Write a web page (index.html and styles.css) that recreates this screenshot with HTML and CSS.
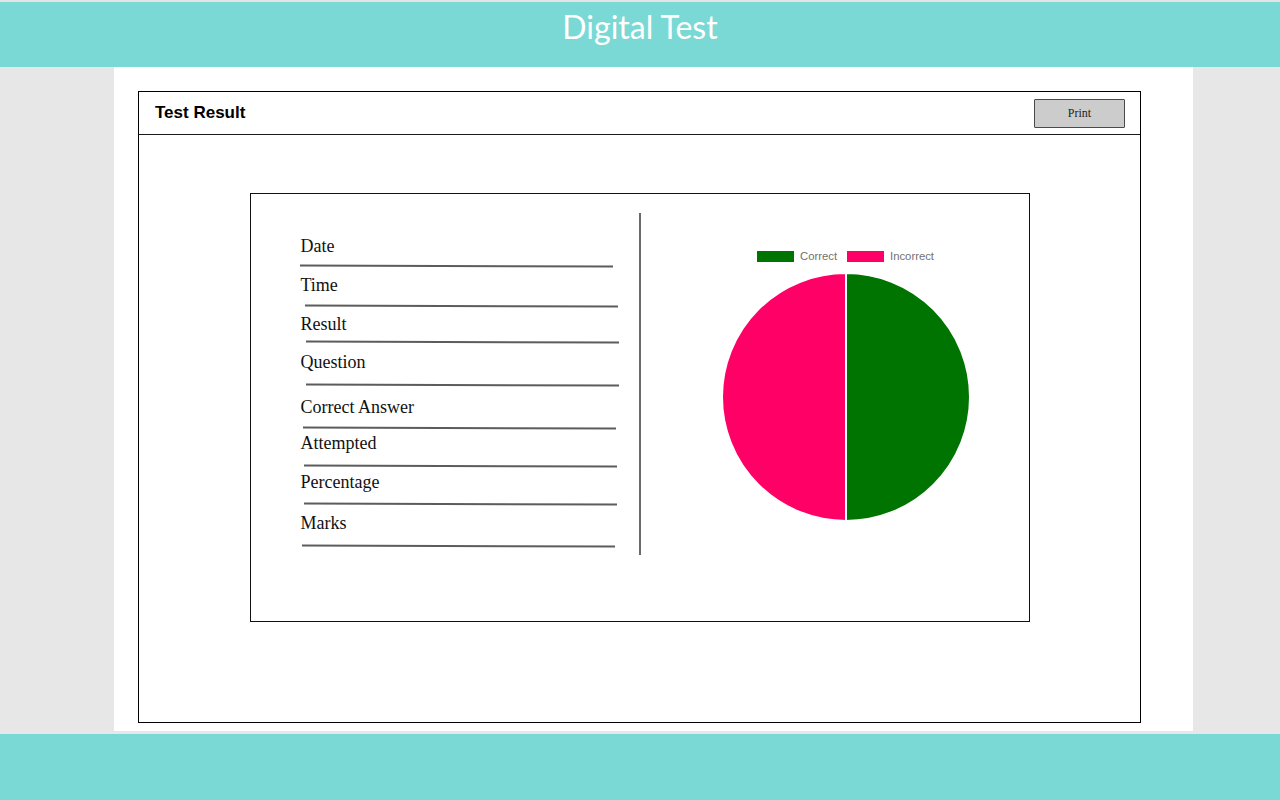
FILE: index.html
```html
<!DOCTYPE html>
<html lang="en">
<head>
<meta charset="utf-8">
<title>Digital Test</title>
<link rel="stylesheet" href="styles.css">
</head>
<body>
<header class="topbar"><h1 class="title">Digital Test</h1></header>
<main class="page">
  <section class="result-card">
    <div class="card-head">
      <h2 class="card-title">Test Result</h2>
      <button class="print-btn" type="button">Print</button>
    </div>
    <div class="card-body">
      <div class="summary">
        <ul class="fields">
          <li class="field"><span class="label">Date</span><span class="rule"></span></li>
          <li class="field"><span class="label">Time</span><span class="rule"></span></li>
          <li class="field"><span class="label">Result</span><span class="rule"></span></li>
          <li class="field"><span class="label">Question</span><span class="rule"></span></li>
          <li class="field"><span class="label">Correct Answer</span><span class="rule"></span></li>
          <li class="field"><span class="label">Attempted</span><span class="rule"></span></li>
          <li class="field"><span class="label">Percentage</span><span class="rule"></span></li>
          <li class="field"><span class="label">Marks</span><span class="rule"></span></li>
        </ul>
        <div class="divider"></div>
        <div class="chart">
          <div class="legend">
            <span class="legend-item"><span class="swatch swatch-correct"></span>Correct</span>
            <span class="legend-item"><span class="swatch swatch-incorrect"></span>Incorrect</span>
          </div>
          <svg class="pie" width="250" height="250" viewBox="0 0 250 250" aria-label="Correct vs incorrect">
            <path d="M125 125 L125 1 A124 124 0 0 1 125 249 Z" fill="#007400" stroke="#ffffff" stroke-width="2"/>
            <path d="M125 125 L125 249 A124 124 0 0 1 125 1 Z" fill="#ff0066" stroke="#ffffff" stroke-width="2"/>
          </svg>
        </div>
      </div>
    </div>
  </section>
</main>
<footer class="bottombar"></footer>
</body>
</html>
```

FILE: styles.css
```css
* { box-sizing: border-box; }

html, body {
  margin: 0;
  padding: 0;
}

body {
  background: #e7e7e7;
  width: 1280px;
  height: 800px;
  overflow: hidden;
  font-family: "Liberation Sans", Arial, sans-serif;
}

.topbar {
  height: 67px;
  border-top: 2px solid #e4e4e4;
  background: #7ad9d4;
  padding-top: 9px;
}

.title {
  margin: 0;
  text-align: center;
  font-family: Lato, "Open Sans", sans-serif;
  font-weight: 400;
  font-size: 32px;
  line-height: 32px;
  color: #ffffff;
}

.page {
  margin-left: 114px;
  width: 1079px;
  height: 664px;
  background: #ffffff;
  padding: 24px 0 0 24px;
}

.result-card {
  width: 1003px;
  height: 632px;
  border: 1px solid #000000;
}

.card-head {
  height: 43px;
  border-bottom: 1px solid #1a1a1a;
  display: flex;
  align-items: center;
  justify-content: space-between;
  padding: 0 15px 0 16px;
}

.card-title {
  margin: 0;
  font-family: "Liberation Sans", Arial, sans-serif;
  font-weight: 700;
  font-size: 17px;
  color: #000000;
}

.print-btn {
  width: 91px;
  height: 29px;
  background: #cccccc;
  border: 1px solid #4a4a4a;
  border-radius: 1px;
  font-family: "Liberation Serif", "Times New Roman", serif;
  font-size: 12px;
  color: #222222;
  padding: 0;
  margin-top: 1px;
}

.card-body {
  padding-top: 58px;
}

.summary {
  width: 780px;
  height: 429px;
  margin: 0 auto;
  border: 1px solid #111111;
  display: flex;
  padding-top: 19px;
}

.fields {
  list-style: none;
  margin: 0;
  padding: 22px 0 0 50px;
  width: 388px;
}

.field {
  display: flex;
  flex-direction: column;
}

.label {
  font-family: "Liberation Serif", "Times New Roman", serif;
  font-size: 18px;
  line-height: 22px;
  color: #111111;
}

.rule {
  display: block;
  width: 313px;
  height: 2px;
  background: #5c5c5c;
  transform: rotate(0.2deg);
}

/* hand-drawn spacing of each row: gap above rule, gap below rule, rule offset */
.field:nth-child(1) .rule { margin: 8px 0 7px -1px; }
.field:nth-child(2) .rule { margin: 9px 0 6px 4px; }
.field:nth-child(3) .rule { margin: 6px 0 8px 5px; }
.field:nth-child(4) .rule { margin: 11px 0 10px 5px; }
.field:nth-child(5) .rule { margin: 9px 0 3px 2px; }
.field:nth-child(6) .rule { margin: 11px 0 4px 3px; }
.field:nth-child(7) .rule { margin: 10px 0 7px 3px; }
.field:nth-child(8) .rule { margin: 11px 0 0 1px; }

.divider {
  width: 2px;
  height: 342px;
  background: #6a6a6a;
}

.chart {
  flex: 1;
  display: flex;
  flex-direction: column;
  align-items: center;
  padding: 38px 0 0 22px;
}

.legend {
  display: flex;
  gap: 10px;
  height: 11px;
  align-items: center;
}

.legend-item {
  display: flex;
  align-items: center;
  gap: 6px;
  font-family: "Liberation Sans", Arial, sans-serif;
  font-size: 11.3px;
  line-height: 11px;
  color: #707070;
}

.swatch {
  display: block;
  width: 37px;
  height: 11px;
}

.swatch-correct { background: #007400; }
.swatch-incorrect { background: #ff0066; }

.pie {
  display: block;
  margin-top: 10px;
}

.bottombar {
  margin-top: 3px;
  height: 66px;
  background: #7ad9d4;
}
```
